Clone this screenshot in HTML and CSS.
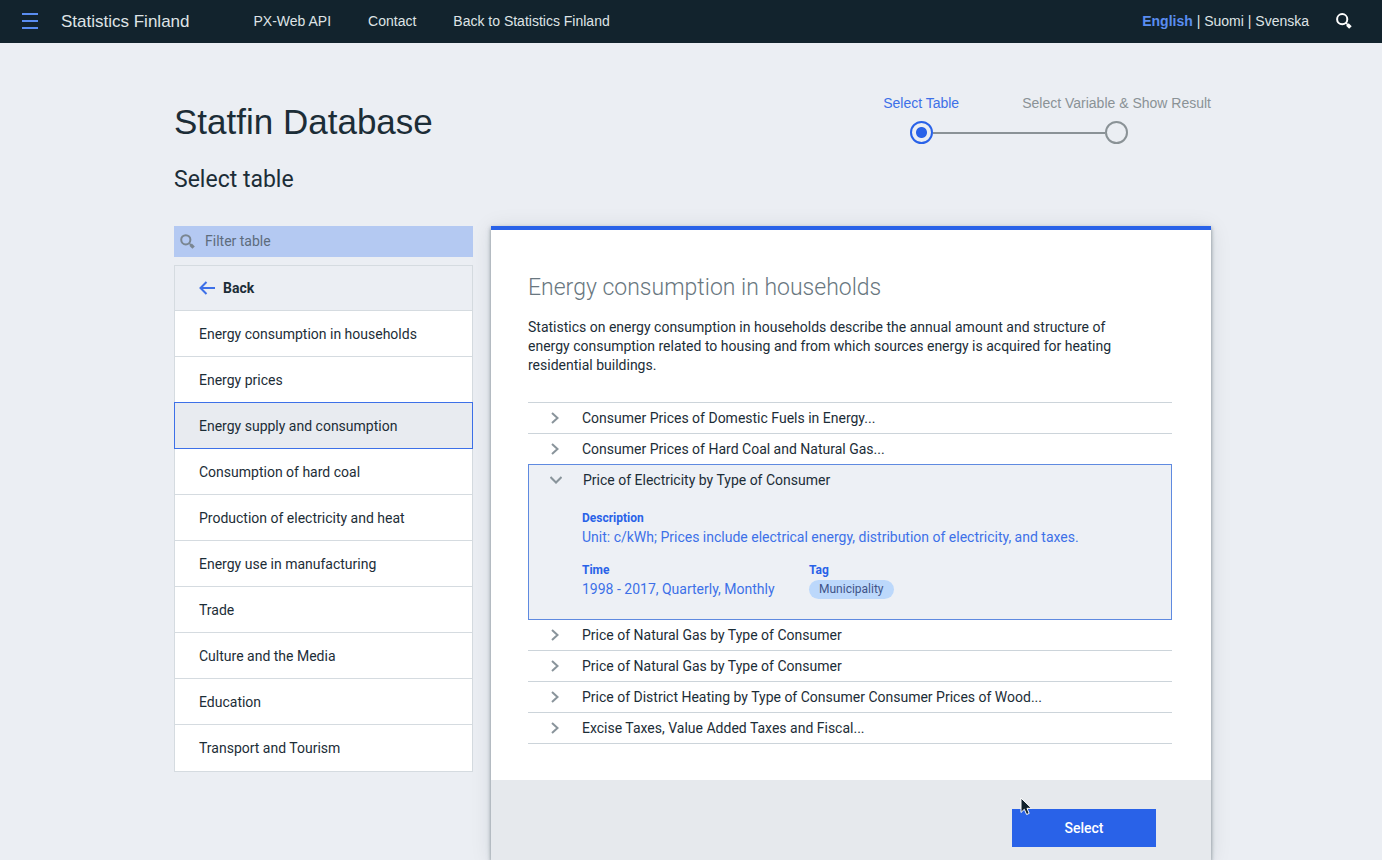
FILE: index.html
```html
<!DOCTYPE html>
<html lang="en">
<head>
<meta charset="utf-8">
<title>Statfin Database</title>
<link rel="stylesheet" href="styles.css">
</head>
<body>
<header class="topbar">
  <button class="icon-button" type="button" aria-label="Menu">
    <svg width="16" height="16" viewBox="0 0 16 16"><path d="M0 1h16M0 8h16M0 15h16" fill="none" stroke="#5a8df0" stroke-width="2"/></svg>
  </button>
  <a class="brand" href="#">Statistics Finland</a>
  <nav class="topnav" aria-label="Main">
    <a href="#">PX-Web API</a>
    <a href="#">Contact</a>
    <a href="#">Back to Statistics Finland</a>
  </nav>
  <div class="languages"><a class="current" href="#">English</a> | <a href="#">Suomi</a> | <a href="#">Svenska</a></div>
  <button class="icon-button" type="button" aria-label="Search">
    <svg width="16" height="16" viewBox="0 0 16 16"><circle cx="6.2" cy="6.2" r="5.1" fill="none" stroke="#fff" stroke-width="2"/><path d="M9.8 9.8l2 2" stroke="#fff" stroke-width="1.5"/><path d="M11.4 11.4l3 3" stroke="#fff" stroke-width="3.6"/></svg>
  </button>
</header>

<main class="page">
  <div class="page-head">
    <div>
      <h1>Statfin Database</h1>
      <h2>Select table</h2>
    </div>
    <ol class="steps">
      <li class="step active"><span>Select Table</span><span class="marker"><i></i><b></b><i class="line"></i></span></li>
      <li class="step"><span>Select Variable &amp; Show Result</span><span class="marker"><i class="line"></i><b></b><i></i></span></li>
    </ol>
  </div>

  <div class="columns">
    <aside class="sidebar">
      <label class="filter">
        <svg width="15" height="15" viewBox="0 0 15 15"><circle cx="5.8" cy="5.8" r="4.6" fill="none" stroke="#7a8691" stroke-width="2"/><path d="M9 9l2 2" stroke="#7a8691" stroke-width="1.5"/><path d="M10.6 10.6l3 3" stroke="#7a8691" stroke-width="3.4"/></svg>
        <input type="text" placeholder="Filter table" aria-label="Filter table">
      </label>
      <ul class="menu">
        <li><button class="back" type="button"><svg width="16" height="14" viewBox="0 0 16 14"><path d="M16 7H1.500M7.500 1L1.500 7l6 6" fill="none" stroke="#3d70e8" stroke-width="2"/></svg>Back</button></li>
        <li><a href="#">Energy consumption in households</a></li>
        <li><a href="#">Energy prices</a></li>
        <li class="selected"><a href="#">Energy supply and consumption</a></li>
        <li><a href="#">Consumption of hard coal</a></li>
        <li><a href="#">Production of electricity and heat</a></li>
        <li><a href="#">Energy use in manufacturing</a></li>
        <li><a href="#">Trade</a></li>
        <li><a href="#">Culture and the Media</a></li>
        <li><a href="#">Education</a></li>
        <li><a href="#">Transport and Tourism</a></li>
      </ul>
    </aside>

    <section class="panel">
      <div class="panel-body">
        <h3>Energy consumption in households</h3>
        <p class="intro">Statistics on energy consumption in households describe the annual amount and structure of energy consumption related to housing and from which sources energy is acquired for heating residential buildings.</p>
        <ul class="tables">
          <li><button type="button"><svg width="8" height="12" viewBox="0 0 8 12"><path d="M1 1l5.500 5L1 11"/></svg>Consumer Prices of Domestic Fuels in Energy...</button></li>
          <li><button type="button"><svg width="8" height="12" viewBox="0 0 8 12"><path d="M1 1l5.500 5L1 11"/></svg>Consumer Prices of Hard Coal and Natural Gas...</button></li>
          <li class="open">
            <button type="button" aria-expanded="true"><svg width="12" height="8" viewBox="0 0 12 8"><path d="M.5 1L6 6.500 11.500 1"/></svg>Price of Electricity by Type of Consumer</button>
            <dl class="details">
              <div class="wide"><dt>Description</dt><dd>Unit: c/kWh; Prices include electrical energy, distribution of electricity, and taxes.</dd></div>
              <div><dt>Time</dt><dd>1998 - 2017, Quarterly, Monthly</dd></div>
              <div><dt>Tag</dt><dd class="tag">Municipality</dd></div>
            </dl>
          </li>
          <li><button type="button"><svg width="8" height="12" viewBox="0 0 8 12"><path d="M1 1l5.500 5L1 11"/></svg>Price of Natural Gas by Type of Consumer</button></li>
          <li><button type="button"><svg width="8" height="12" viewBox="0 0 8 12"><path d="M1 1l5.500 5L1 11"/></svg>Price of Natural Gas by Type of Consumer</button></li>
          <li><button type="button"><svg width="8" height="12" viewBox="0 0 8 12"><path d="M1 1l5.500 5L1 11"/></svg>Price of District Heating by Type of Consumer Consumer Prices of Wood...</button></li>
          <li><button type="button"><svg width="8" height="12" viewBox="0 0 8 12"><path d="M1 1l5.500 5L1 11"/></svg>Excise Taxes, Value Added Taxes and Fiscal...</button></li>
        </ul>
      </div>
      <div class="panel-foot">
        <div class="action">
          <button class="primary" type="button">Select</button>
          <svg class="pointer" width="13" height="19" viewBox="0 0 13 19"><path d="M1 1v14.500l3.300-3.200 2.300 5.200 2.600-1.100-2.200-5.100h4.500z" fill="#12232d" stroke="#fff" stroke-width="1"/></svg>
        </div>
      </div>
    </section>
  </div>
</main>
</body>
</html>
```

FILE: styles.css
```css
* { box-sizing: border-box; }

body {
  margin: 0;
  min-height: 100vh;
  display: flex;
  flex-direction: column;
  background: #ebeef3;
  color: #1c2d37;
  font: 14px/19px Roboto, "Liberation Sans", sans-serif;
}

a { color: inherit; text-decoration: none; }
button { font: inherit; color: inherit; background: none; border: 0; padding: 0; text-align: left; cursor: pointer; }
ul, ol, dl, dd { margin: 0; padding: 0; list-style: none; }

.topbar {
  height: 43px;
  display: flex;
  align-items: center;
  padding: 0 30px 1px 22px;
  background: #12232d;
  color: #dfe3e6;
  font-family: "Liberation Sans", Arial, sans-serif;
}
.icon-button { display: flex; width: 16px; }
.brand { margin-left: 23px; font-size: 17px; }
.topnav { display: flex; gap: 37px; margin-left: 64px; }
.languages { margin-left: auto; margin-right: 27px; }
.languages .current { color: #5a8df0; font-weight: bold; }

.page { flex: 1; display: flex; flex-direction: column; padding: 0 171px 0 174px; }

.page-head { display: flex; justify-content: space-between; padding: 53px 0 31px; }
h1, h2, h3 { margin: 0; font-weight: 400; }
h1 { padding-top: 6px; font: 400 35px/40px "Liberation Sans", Arial, sans-serif; }
h2 { margin-top: 22px; font-size: 23px; line-height: 31px; }

.steps { display: flex; font-family: "Liberation Sans", Arial, sans-serif; color: #8a9296; }
.step { display: flex; flex-direction: column; gap: 11px; line-height: 14px; text-align: center; }
.step.active { width: 202px; }
.step.active > span:first-child { color: #3d70e8; }
.marker { display: grid; grid-template-columns: 1fr 23px 1fr; align-items: center; }
.marker b { height: 23px; border: 2px solid #8a9296; border-radius: 50%; }
.marker .line { height: 2px; background: #8a9296; }
.active .marker b { border-color: #2962e8; background: radial-gradient(circle, #2962e8 5px, transparent 6px); }

.columns { flex: 1; display: flex; gap: 18px; }
.sidebar { flex: 0 0 299px; }

.filter { display: flex; align-items: center; height: 31px; gap: 10px; padding-left: 6px; background: #b4c9f2; }
.filter input { flex: 1; min-width: 0; border: 0; padding: 0; background: none; font: inherit; outline: 0; }
.filter input::placeholder { color: #5d6c7c; opacity: 1; }

.menu { margin-top: 8px; border: 1px solid #d5dbe0; background: #fff; }
.menu li { border-bottom: 1px solid #d5dbe0; }
.menu li:last-child { border-bottom: 0; padding-bottom: 1px; }
.menu a, .menu .back { display: flex; align-items: center; width: 100%; height: 45px; padding: 2px 0 0 24px; }
.menu .back { height: 44px; padding-top: 0; gap: 8px; background: #ebeef3; font-weight: 700; }
.menu .selected { margin: -1px -1px 0; border: 1px solid #3d70e8; background: #e8ebf0; }

.panel {
  flex: 1;
  min-width: 0;
  display: flex;
  flex-direction: column;
  border-top: 4px solid #2962e8;
  background: #fff;
  box-shadow: 0 2px 4px rgba(18, 35, 45, .5), 0 2px 20px rgba(18, 35, 45, .1);
}
.panel-body { padding: 42px 39px 36px 37px; }
h3 { color: #697780; font-size: 23px; font-weight: 300; line-height: 31px; }
.intro { max-width: 600px; margin: 15px 0 27px; }

.tables { border-top: 1px solid #ccd4da; }
.tables li { border-bottom: 1px solid #ccd4da; }
.tables button { display: grid; grid-template-columns: 54px 1fr; align-items: center; width: 100%; height: 30px; }
.tables button svg { justify-self: center; fill: none; stroke: #89949b; stroke-width: 2; }
.tables .open { margin-top: -1px; border: 1px solid #5f8ae0; background: #edf0f5; }

.details { display: grid; grid-template-columns: 195px 1fr; column-gap: 32px; row-gap: 14px; padding: 14px 40px 20px 53px; color: #3d70e8; }
.details .wide { grid-column: 1 / -1; }
.details dt { font-size: 12px; font-weight: 700; color: #2962e8; }
.details .tag { display: inline-block; vertical-align: top; padding: 0 10px; border-radius: 10px; background: #bcd8fb; color: #3f5488; font-size: 12px; }

.panel-foot { flex: 1; display: flex; justify-content: flex-end; align-items: flex-start; padding: 29px 55px 12px; background: #e6e9ed; }
.action { position: relative; }
.primary { display: block; width: 144px; height: 38px; background: #2962e8; color: #fff; font-weight: 500; text-align: center; }
.pointer { position: absolute; left: 8px; top: -12px; }
```
